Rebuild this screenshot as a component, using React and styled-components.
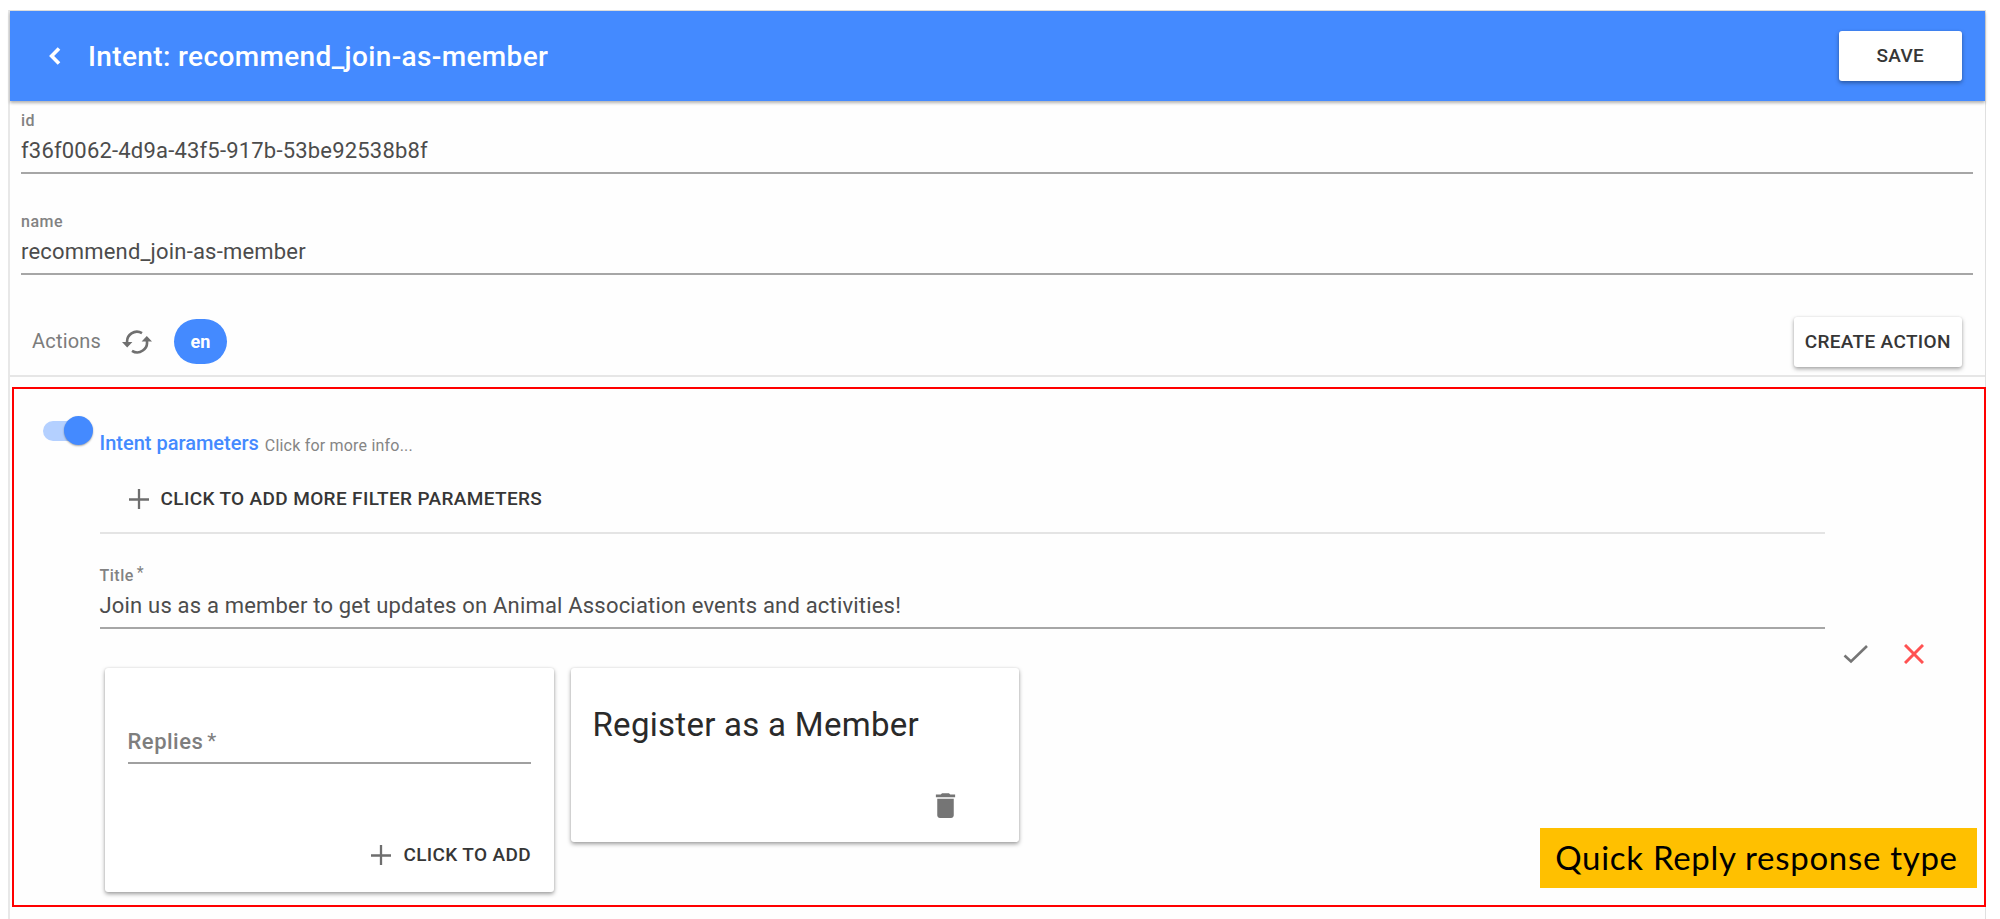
import React from "react";
import styled, { createGlobalStyle } from "styled-components";
import { MdDelete } from "react-icons/md";

const GlobalStyle = createGlobalStyle`
  * { box-sizing: border-box; }
  body { margin: 0; background: #fff; font-family: Roboto, "Liberation Sans", sans-serif; }
`;

const Page = styled.div`
  width: 2000px;
  height: 919px;
  overflow: hidden;
  padding: 10px 0 0 8px;
`;

const Panel = styled.main`
  width: 1978px;
  height: 940px;
  border: 1px solid #e0e0e0;
  border-left: 2px solid #e8e8e8;
  background: #fefefe;
`;

const Header = styled.header`
  position: relative;
  height: 90px;
  display: flex;
  align-items: center;
  padding: 0 23px 0 39px;
  background: #448aff;
  color: #fff;
  box-shadow: 0 2px 3px rgba(0, 0, 0, 0.3);
`;

const HeaderTitle = styled.h1`
  flex: 1;
  margin: 1px 0 0 27px;
  font-size: 28px;
  line-height: 40px;
  font-weight: 500;
  letter-spacing: 0.37px;
`;

const RaisedButton = styled.button`
  width: ${(p) => p.$width}px;
  height: 50px;
  padding: 0;
  border: 0;
  border-radius: 3px;
  background: #fff;
  color: #363636;
  font: 500 19px/50px Roboto, sans-serif;
  letter-spacing: 0.33px;
  text-align: center;
  white-space: nowrap;
  box-shadow: 0 2px 4px rgba(0, 0, 0, 0.35), 0 0 2px rgba(0, 0, 0, 0.08);
`;

const Fields = styled.section`
  display: flex;
  flex-direction: column;
  gap: 36px;
  padding: 8px 12px 0 11px;
`;

const Field = styled.div`
  border-bottom: 2px solid #a6a6a6;
  padding: 1px 0 7px;
`;

const Label = styled.div`
  display: flex;
  gap: 3px;
  margin-bottom: 5px;
  font-size: 16px;
  line-height: 22px;
  font-weight: 500;
  letter-spacing: 0.5px;
  color: #828282;
`;

const Asterisk = styled.span`
  font-size: ${(p) => p.$size}px;
  margin-top: ${(p) => p.$shift}px;
  font-weight: 400;
`;

const Value = styled.div`
  font-size: 22px;
  line-height: 28px;
  letter-spacing: 0.19px;
  color: #4c4c4c;
`;

const ActionsBar = styled.section`
  height: 102px;
  padding: 42px 23px 8px 22px;
  display: flex;
  align-items: center;
  border-bottom: 2px solid #e6e6e6;
`;

const ActionsLabel = styled.span`
  font-size: 20px;
  line-height: 28px;
  letter-spacing: 0.2px;
  color: #7c7c7c;
  margin-bottom: 3px;
  width: 90px;
`;

const Language = styled.span`
  width: 53px;
  height: 45px;
  margin: 0 auto 2px 22px;
  border-radius: 23px;
  background: #448aff;
  color: #fff;
  font-size: 18px;
  line-height: 45px;
  font-weight: 700;
  text-align: center;
`;

const ActionBox = styled.section`
  position: relative;
  width: 1974px;
  height: 520px;
  margin: 10px 0 0 2px;
  border: 2px solid #ff0000;
  display: flex;
  padding-left: 29px;
`;

const Toggle = styled.div`
  width: 50px;
  height: 29px;
  margin: 27px 6.5px 0 0;
  display: flex;
  align-items: center;
`;

const Track = styled.div`
  width: 48px;
  height: 20px;
  border-radius: 10px;
  background: #b4d0ff;
  display: flex;
  align-items: center;
  padding-left: 21px;
`;

const Thumb = styled.div`
  flex: none;
  width: 29px;
  height: 29px;
  border-radius: 50%;
  background: #448aff;
  box-shadow: 0 1px 2px rgba(0, 0, 0, 0.35);
`;

const Details = styled.div`
  width: 1725px;
  padding-top: 40px;
`;

const ParametersHeading = styled.div`
  display: flex;
  gap: 6px;
  height: 28px;
  font-size: 20px;
  line-height: 28px;
  font-weight: 500;
  color: #448aff;
`;

const Hint = styled.span`
  font-size: 16px;
  line-height: 33px;
  letter-spacing: 0.2px;
  font-weight: 400;
  color: #858585;
`;

const FlatButton = styled.button`
  display: flex;
  align-items: center;
  gap: 12px;
  padding: 0;
  border: 0;
  background: none;
  color: #363636;
  font: 500 19px/28px Roboto, sans-serif;
  letter-spacing: 0.36px;
  white-space: nowrap;
`;

const ParameterRow = styled.div`
  height: 77px;
  padding: 28px 0 0 29px;
  border-bottom: 2px solid #e4e4e4;
  margin-bottom: 30px;
`;

const Cards = styled.div`
  display: flex;
  align-items: flex-start;
  gap: 17px;
  margin: 39px 0 0 5.5px;
`;

const Card = styled.div`
  width: 448.5px;
  height: ${(p) => p.$height}px;
  padding: ${(p) => p.$padding};
  display: flex;
  flex-direction: column;
  justify-content: space-between;
  align-items: flex-end;
  border-radius: 3px;
  background: #fff;
  box-shadow: 0 2px 4px rgba(0, 0, 0, 0.38), 0 0 2px rgba(0, 0, 0, 0.1);
`;

const ReplyInput = styled.div`
  width: 100%;
  height: 36px;
  display: flex;
  gap: 4px;
  border-bottom: 2px solid #a0a0a0;
  font-size: 22px;
  line-height: 28px;
  font-weight: 500;
  letter-spacing: 0.5px;
  color: #7e7e7e;
`;

const CardTitle = styled.h2`
  align-self: flex-start;
  margin: 0;
  font-size: 33px;
  line-height: 40px;
  font-weight: 400;
  letter-spacing: 0.28px;
  color: #2a2a2a;
`;

const Tools = styled.div`
  display: flex;
  align-items: flex-start;
  gap: 34.5px;
  padding: 255px 0 0 18.5px;
`;

const Tag = styled.div`
  position: absolute;
  right: 7px;
  bottom: 17px;
  width: 437px;
  height: 60px;
  padding-right: 4px;
  background: #ffc000;
  color: #000;
  font-family: Lato, sans-serif;
  font-size: 33px;
  line-height: 58px;
  letter-spacing: 0.7px;
  text-align: center;
  white-space: nowrap;
`;

const Stroke = styled.svg`
  flex: none;
  fill: none;
  stroke: ${(p) => p.$color};
  stroke-width: ${(p) => p.$weight};
`;

const BackIcon = () => (
  <Stroke width="12" height="18" $color="#fff" $weight={3.6}>
    <path d="M10 1.4L2.6 9l7.4 7.6" />
  </Stroke>
);

const PlusIcon = () => (
  <Stroke width="20" height="20" $color="#6e6e6e" $weight={2.3}>
    <path d="M10 0v20M0 10.5h20" />
  </Stroke>
);

const RefreshIcon = () => (
  <Stroke width="30" height="24" $color="#6f6f6f" $weight={2.6}>
    <path d="M5.2 13A9.8 9.8 0 0 1 20 3.2M24.8 10.5A9.8 9.8 0 0 1 10 20.8" />
    <path d="M0 12h10.4L5.2 17.4zM19.6 11.5H30L24.8 6z" fill="#6f6f6f" stroke="none" />
  </Stroke>
);

const CheckIcon = () => (
  <Stroke width="26" height="20" $color="#757575" $weight={2.6}>
    <path d="M1.5 11.5l6.5 6L24 2" />
  </Stroke>
);

const CrossIcon = () => (
  <Stroke width="20" height="20" $color="#ff5252" $weight={3}>
    <path d="M1 1l18 18M19 1L1 19" />
  </Stroke>
);

const TrashIcon = styled(MdDelete)`
  width: 33px;
  height: 33px;
  color: #757575;
`;

export default function App() {
  return (
    <Page>
      <GlobalStyle />
      <Panel>
        <Header>
          <BackIcon />
          <HeaderTitle>Intent: recommend_join-as-member</HeaderTitle>
          <RaisedButton $width={123.5}>SAVE</RaisedButton>
        </Header>
        <Fields>
          <Field>
            <Label>id</Label>
            <Value>f36f0062-4d9a-43f5-917b-53be92538b8f</Value>
          </Field>
          <Field>
            <Label>name</Label>
            <Value>recommend_join-as-member</Value>
          </Field>
        </Fields>
        <ActionsBar>
          <ActionsLabel>Actions</ActionsLabel>
          <RefreshIcon />
          <Language>en</Language>
          <RaisedButton $width={168.5}>CREATE ACTION</RaisedButton>
        </ActionsBar>
        <ActionBox>
          <Toggle>
            <Track>
              <Thumb />
            </Track>
          </Toggle>
          <Details>
            <ParametersHeading>
              Intent parameters <Hint>Click for more info...</Hint>
            </ParametersHeading>
            <ParameterRow>
              <FlatButton>
                <PlusIcon />
                CLICK TO ADD MORE FILTER PARAMETERS
              </FlatButton>
            </ParameterRow>
            <Field>
              <Label>
                Title
                <Asterisk $size={16} $shift={-3}>*</Asterisk>
              </Label>
              <Value>Join us as a member to get updates on Animal Association events and activities!</Value>
            </Field>
            <Cards>
              <Card $height={224} $padding="60px 22.5px 23px">
                <ReplyInput>
                  Replies
                  <Asterisk $size={21} $shift={-1}>*</Asterisk>
                </ReplyInput>
                <FlatButton>
                  <PlusIcon />
                  CLICK TO ADD
                </FlatButton>
              </Card>
              <Card $height={174} $padding="37px 57px 20px 22px">
                <CardTitle>Register as a Member</CardTitle>
                <TrashIcon />
              </Card>
            </Cards>
          </Details>
          <Tools>
            <CheckIcon />
            <CrossIcon />
          </Tools>
          <Tag>Quick Reply response type</Tag>
        </ActionBox>
      </Panel>
    </Page>
  );
}
